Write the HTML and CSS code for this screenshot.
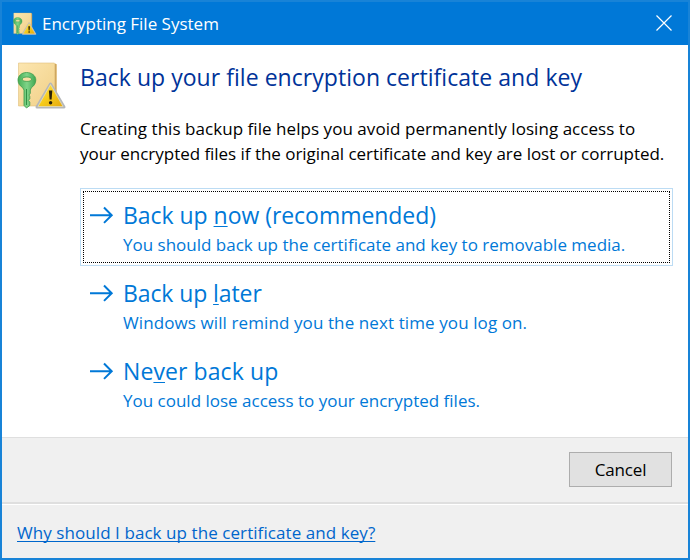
FILE: index.html
```html
<!DOCTYPE html>
<html lang="en">
<head>
<meta charset="utf-8">
<title>Encrypting File System</title>
<link rel="stylesheet" href="styles.css">
</head>
<body>
<svg class="defs" width="0" height="0" aria-hidden="true">
  <defs>
    <linearGradient id="folder" x1="0" y1="0" x2="1" y2="1"><stop offset="0" stop-color="#fce6b0"/><stop offset="1" stop-color="#f0cf86"/></linearGradient>
    <linearGradient id="key" x1="0" y1="0" x2="1" y2="0"><stop offset="0" stop-color="#45ad55"/><stop offset=".5" stop-color="#7fd488"/><stop offset="1" stop-color="#3fa650"/></linearGradient>
    <linearGradient id="warn" x1="0" y1="0" x2="1" y2="1"><stop offset="0" stop-color="#ffe65a"/><stop offset=".5" stop-color="#f6cb1c"/><stop offset="1" stop-color="#e5a80c"/></linearGradient>
    <symbol id="efs" viewBox="0 0 50 48">
      <path d="M1.500 1H37l2.500 1.500V44h-38z" fill="url(#folder)" stroke="#e0bf7c" stroke-width=".6"/>
      <path d="M38.500 2v42" stroke="#cfa75f" stroke-width="1.600"/>
      <path fill-rule="evenodd" d="M9.500 10.500C4.500 10.500 1 14 1 18c0 3.500 2 6 4.500 7.500L7 28v15.500l2.500 2.500 3.300-2.500V40l-1.500-1.500 1.500-1.800v-2.200L12 33l1.300-1.700V28l1.200-2.500c2.500-1.500 4.300-4.200 4.300-7.500 0-4.500-4.300-7.500-9.300-7.500zm.4 4.500c3 0 4.600 1 4.600 2.300s-1.600 2.100-4.600 2.100-4.600-.8-4.600-2.100S6.900 15 9.900 15z" fill="url(#key)" stroke="#3b9a4b" stroke-width=".8"/>
      <path d="M9.500 27v16" stroke="#338f45" stroke-width="1"/>
      <path d="M33.500 22 47 45H20z" fill="url(#warn)" stroke="#b5b7ba" stroke-width="3" stroke-linejoin="round"/>
      <path d="M33.500 22.500 46 44.500H21z" fill="url(#warn)" stroke="#e9e2bd" stroke-width=".7"/>
      <path d="M31.900 28.500h3.400l-.7 9h-2z" fill="#29210a"/><circle cx="33.600" cy="40.700" r="1.700" fill="#29210a"/>
    </symbol>
    <symbol id="arrow" viewBox="0 0 24 18">
      <path d="M0 9.200h22M14 1.500l7.700 7.700L14 16.900" fill="none" stroke="#0078d7" stroke-width="2"/>
    </symbol>
  </defs>
</svg>
<div class="dialog">
  <header class="titlebar">
    <svg class="titlebar-icon"><use href="#efs"/></svg>
    <span class="titlebar-text">Encrypting File System</span>
    <svg class="close" viewBox="0 0 16 16"><path d="M.5.500l15 15M15.500.500l-15 15" stroke="#fff" stroke-width="1.200"/></svg>
  </header>
  <main class="content">
    <svg class="main-icon"><use href="#efs"/></svg>
    <div class="body">
      <h1><span class="t-head">Back up your file encryption certificate and key</span></h1>
      <p><span class="t-p1">Creating this backup file helps you avoid permanently losing access to</span><br><span class="t-p2">your encrypted files if the original certificate and key are lost or corrupted.</span></p>
      <div class="commands">
        <div class="command focused">
          <svg class="arrow"><use href="#arrow"/></svg>
          <div><div class="label"><span class="t-c1">Back up <u>n</u>ow (recommended)</span></div><div class="note"><span class="t-n1">You should back up the certificate and key to removable media.</span></div></div>
        </div>
        <div class="command">
          <svg class="arrow"><use href="#arrow"/></svg>
          <div><div class="label"><span class="t-c2">Back up <u>l</u>ater</span></div><div class="note"><span class="t-n2">Windows will remind you the next time you log on.</span></div></div>
        </div>
        <div class="command">
          <svg class="arrow"><use href="#arrow"/></svg>
          <div><div class="label"><span class="t-c3">Ne<u>v</u>er back up</span></div><div class="note"><span class="t-n3">You could lose access to your encrypted files.</span></div></div>
        </div>
      </div>
    </div>
  </main>
  <div class="actions"><button class="cancel">Cancel</button></div>
  <footer class="footnote"><a href="#">Why should I back up the certificate and key?</a></footer>
</div>
</body>
</html>
```
FILE: styles.css
```css
* { box-sizing: border-box; }
body { margin: 0; font-family: "Open Sans", "Noto Sans", sans-serif; font-size: 17px; color: #000; }
.defs { position: absolute; }
.dialog { width: 690px; height: 560px; border: 2px solid #1883d7; background: #fff; display: flex; flex-direction: column; }
.titlebar { height: 43px; flex: none; background: #0078d7; color: #fff; display: flex; align-items: center; padding: 0 16px 0 11px; }
.titlebar-icon { width: 24px; height: 24px; }
.titlebar-text { margin-left: 5px; white-space: nowrap; }
.close { width: 16px; height: 16px; margin-left: auto; margin-top: -1px; }
.content { height: 392px; flex: none; display: flex; padding: 16px 15px 0 15px; }
.main-icon { width: 50px; height: 48px; flex: none; margin-top: 1px; }
.body { width: 593px; margin-left: 13px; white-space: nowrap; }
h1 { margin: 0; height: 33px; line-height: 32px; font-size: 23px; font-weight: 400; color: #003399; }
p { margin: 22px 0 0; line-height: 25px; height: 50px; }
.commands { margin-top: 22px; }
.command { height: 78px; display: flex; border: 1px solid transparent; padding: 9px; position: relative; color: #0078d7; }
.focused { border-color: #bcdcf4; }
.focused::after { content: ""; position: absolute; inset: 2px; border: 1px dotted #000; }
.arrow { width: 24px; height: 18px; margin: 8px 9px 0 0; flex: none; }
.label { height: 34px; line-height: 34px; font-size: 23px; }
.note { height: 24px; line-height: 26px; }
.t-head { letter-spacing: .04px; }
.t-p1 { letter-spacing: .05px; }
.t-p2 { letter-spacing: -.035px; }
.t-c1 { letter-spacing: -.04px; }
.t-c2 { letter-spacing: -.1px; }
.t-c3 { letter-spacing: .09px; }
.t-n2 { letter-spacing: .1px; }
u { text-decoration: underline; text-decoration-thickness: 1px; text-underline-offset: 2px; text-decoration-skip-ink: none; }
.actions { height: 65px; flex: none; background: #f0f0f0; border-top: 1px solid #dfdfdf; display: flex; justify-content: flex-end; padding: 14px 16px 0 0; }
.cancel { width: 103px; height: 35px; padding: 0 0 1px; border: 1px solid #adadad; background: #e1e1e1; font: inherit; letter-spacing: -.15px; color: #000; }
.footnote { flex: 1; background: #f0f0f0; border-top: 2px solid #dfdfdf; box-shadow: inset 0 1px #fff; padding: 16px 15px 0; line-height: 25px; }
.footnote a { color: #0066cc; letter-spacing: .07px; text-decoration-thickness: 1px; text-underline-offset: 2px; text-decoration-skip-ink: none; }
```
